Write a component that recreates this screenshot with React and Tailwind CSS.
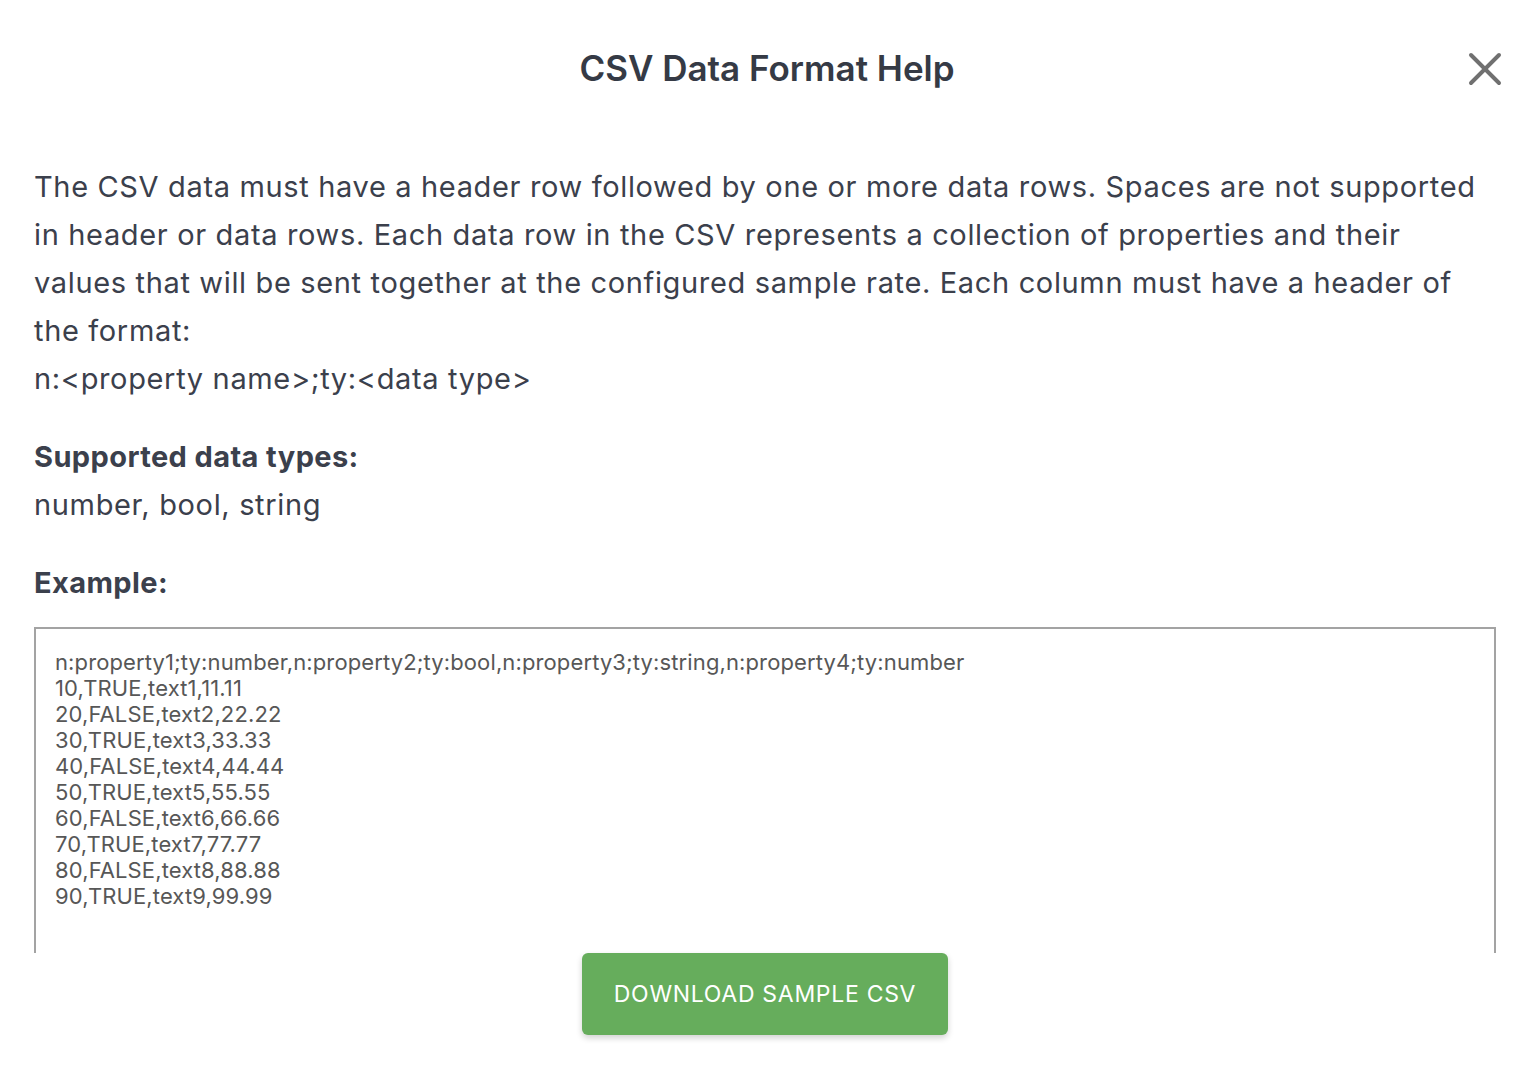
import { X } from 'lucide-react';

const sample = `n:property1;ty:number,n:property2;ty:bool,n:property3;ty:string,n:property4;ty:number
10,TRUE,text1,11.11
20,FALSE,text2,22.22
30,TRUE,text3,33.33
40,FALSE,text4,44.44
50,TRUE,text5,55.55
60,FALSE,text6,66.66
70,TRUE,text7,77.77
80,FALSE,text8,88.88
90,TRUE,text9,99.99`;

const App = () => {
  return (
    <div className="h-[1080px] bg-white flex flex-col text-[#3b404c]" style={{ fontFamily: 'Inter, "Noto Sans", sans-serif' }}>
      {/* Header */}
      <div className="relative pt-[44px] h-[163px] shrink-0">
        <h2 className="text-center text-[35px] leading-[48px] font-semibold text-[#353a45]">CSV Data Format Help</h2>
        <button className="absolute right-[21px] top-[41px] text-[#707070]">
          <X className="w-[56px] h-[56px]" strokeWidth={1.7} />
        </button>
      </div>

      {/* Body */}
      <div className="h-[790px] overflow-hidden pl-[34px] pr-[38px] shrink-0">
        <p className="text-[29px] leading-[48px] tracking-[0.65px]">
          The CSV data must have a header row followed by one or more data rows. Spaces are not supported in header or data rows. Each data row in the CSV represents a collection of properties and their values that will be sent together at the configured sample rate. Each column must have a header of the format:
          <br />
          n:&lt;property name&gt;;ty:&lt;data type&gt;
        </p>
        <h3 className="mt-[30px] text-[29px] leading-[48px] font-bold tracking-[0.4px]">Supported data types:</h3>
        <p className="text-[29px] leading-[48px] tracking-[0.65px]">number, bool, string</p>
        <h3 className="mt-[30px] text-[29px] leading-[48px] font-bold tracking-[0.4px]">Example:</h3>
        <textarea
          readOnly
          value={sample}
          className="mt-[20px] block w-full h-[380px] resize-none border-2 border-[#a3a3a3] px-[19px] pt-[20px] text-[22px] leading-[26px] tracking-[0.12px] text-[#575757] outline-none"
          style={{ fontFamily: 'Inter, "Noto Sans", sans-serif' }}
        />
      </div>

      {/* Footer */}
      <div className="flex justify-center pr-[4px]">
        <button className="w-[366px] h-[82px] rounded-md bg-[#66ad5c] text-white text-[23px] tracking-[0.7px] shadow-[0_3px_6px_rgba(0,0,0,0.18)]">
          DOWNLOAD SAMPLE CSV
        </button>
      </div>
    </div>
  );
};

export default App;
